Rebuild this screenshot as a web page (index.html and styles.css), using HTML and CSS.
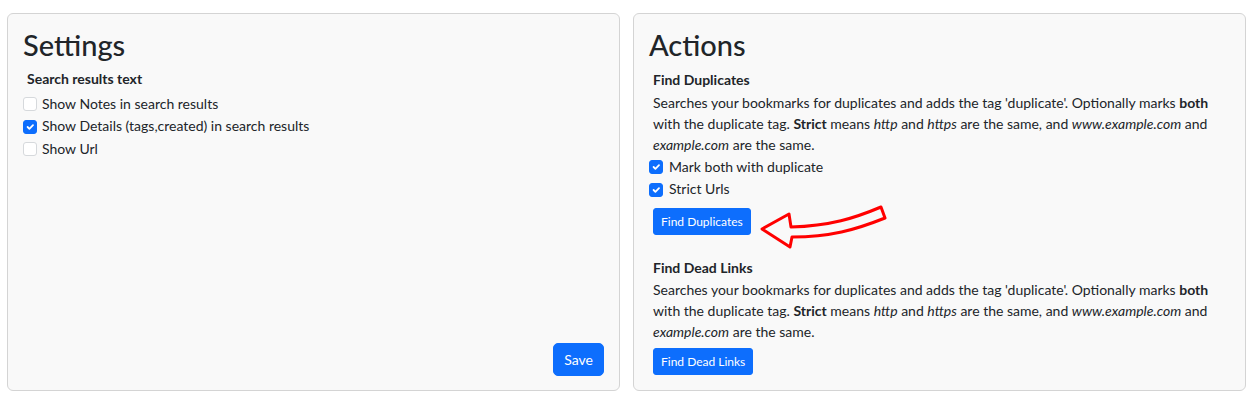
FILE: index.html
```html
<!DOCTYPE html>
<html>
<head>
<meta charset="utf-8">
<link rel="stylesheet" href="styles.css">
</head>
<body>
<div class="page">
  <section class="panel settings">
    <h2 class="panel-title">Settings</h2>
    <div class="group-title">Search results text</div>
    <label class="check"><input type="checkbox"> Show Notes in search results</label>
    <label class="check"><input type="checkbox" checked> Show Details (tags,created) in search results</label>
    <label class="check"><input type="checkbox"> Show Url</label>
    <div class="panel-footer"><button class="btn">Save</button></div>
  </section>
  <section class="panel actions">
    <h2 class="panel-title">Actions</h2>
    <div class="action">
      <div class="action-title">Find Duplicates</div>
      <p class="desc">Searches your bookmarks for duplicates and adds the tag 'duplicate'. Optionally marks <b>both</b> with the duplicate tag. <b>Strict</b> means <i>http</i> and <i>https</i> are the same, and <i>www.example.com</i> and <i>example.com</i> are the same.</p>
      <label class="check"><input type="checkbox" checked> Mark both with duplicate</label>
      <label class="check"><input type="checkbox" checked> Strict Urls</label>
      <div class="btn-row"><button class="btn btn-sm">Find Duplicates</button></div>
    </div>
    <div class="action second">
      <div class="action-title">Find Dead Links</div>
      <p class="desc">Searches your bookmarks for duplicates and adds the tag 'duplicate'. Optionally marks <b>both</b> with the duplicate tag. <b>Strict</b> means <i>http</i> and <i>https</i> are the same, and <i>www.example.com</i> and <i>example.com</i> are the same.</p>
      <div class="btn-row"><button class="btn btn-sm">Find Dead Links</button></div>
    </div>
  </section>
</div>
<svg class="arrow" width="140" height="60" viewBox="755 195 140 60">
  <path d="M762 229 L789 214 L791 227 C 830 226, 855 218, 881 207 L885 218 C 855 230, 830 237, 792 237 L790 247 Z" fill="none" stroke="#f00" stroke-width="3" stroke-linejoin="round"/>
</svg>
</body>
</html>
```
FILE: styles.css
```css
* { box-sizing: border-box; }
html, body { margin: 0; padding: 0; background: #fff; }
body {
  font-family: "Segoe UI", "Lato", "Liberation Sans", sans-serif;
  font-size: 14px;
  line-height: 1.5;
  color: #212529;
}
.page {
  display: flex;
  gap: 13px;
  height: 406px;
  padding: 13px 11px 15px 7px;
}
.panel {
  flex: 1;
  background: #f9f9f9;
  border: 1px solid #d4d4d4;
  border-radius: 6px;
  padding: 14px 15px 14px 15px;
  display: flex;
  flex-direction: column;
}
.panel-title {
  margin: 0 0 6px 0;
  font-size: 29px;
  font-weight: 500;
  line-height: 1.2;
}
.group-title, .action-title {
  font-weight: 700;
  font-size: 14px;
  padding-left: 4px;
  margin-bottom: 2px;
}
.settings .group-title { margin-top: -1px; margin-bottom: 4px; }
.check {
  display: flex;
  align-items: center;
  gap: 5px;
  line-height: 22.5px;
}
.check input {
  appearance: none;
  -webkit-appearance: none;
  width: 14px;
  height: 14px;
  margin: 0;
  border: 1px solid #d6d9dc;
  border-radius: 3px;
  background: #fff;
  flex: none;
}
.check input:checked {
  background: #0d6efd url("data:image/svg+xml,%3csvg xmlns='http://www.w3.org/2000/svg' viewBox='0 0 20 20'%3e%3cpath fill='none' stroke='%23fff' stroke-linecap='round' stroke-linejoin='round' stroke-width='3' d='m6 10 3 3 6-6'/%3e%3c/svg%3e") center/100% no-repeat;
  border-color: #0d6efd;
}
.actions .check { gap: 6px; }
.panel-footer {
  margin-top: auto;
  display: flex;
  justify-content: flex-end;
}
.btn {
  font-family: inherit;
  font-size: 14px;
  line-height: 1.5;
  color: #fff;
  background: #0d6efd;
  border: 1px solid #0d6efd;
  border-radius: 5px;
  padding: 5px 10px;
}
.btn-sm {
  font-size: 12px;
  line-height: 17px;
  padding: 4px 7px;
  border-radius: 3px;
}
.action { padding-left: 4px; }
.action .action-title { padding-left: 0; }
.action .check { margin-left: -4px; }
.desc { margin: 0 0 1px 0; }
.btn-row { margin-top: 7px; }
.second { margin-top: 22px; }
.second .action-title { margin-bottom: 1px; }
.second .btn-row { margin-top: 6px; }
.arrow {
  position: absolute;
  left: 755px;
  top: 195px;
}
```
